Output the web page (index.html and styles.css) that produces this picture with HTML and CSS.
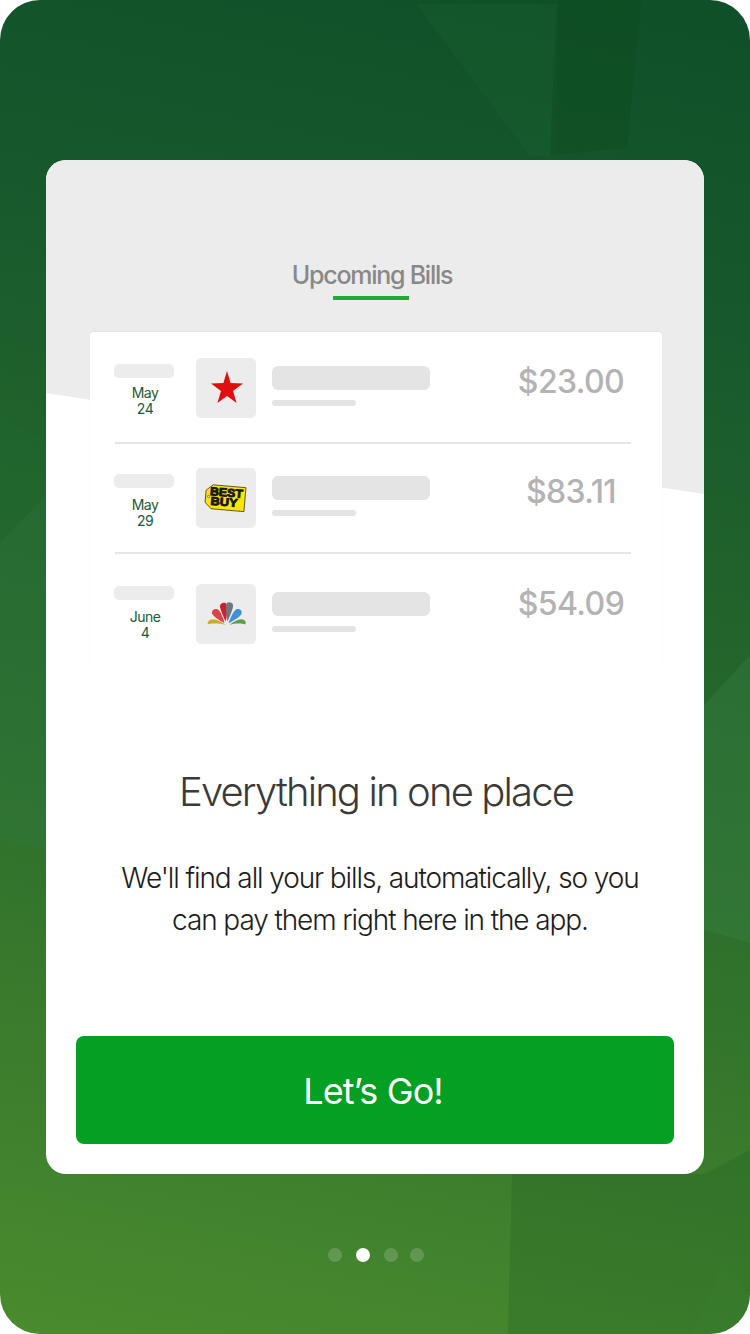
FILE: index.html
```html
<!DOCTYPE html>
<html lang="en">
<head>
  <meta charset="UTF-8">
  <title>Upcoming Bills</title>
  <link rel="stylesheet" href="styles.css">
</head>
<body>
  <div class="screen">
    <svg class="backdrop" viewBox="0 0 750 1334" preserveAspectRatio="none" aria-hidden="true">
      <polygon points="416,4 558,4 556,156 530,156" fill="#2a7a3a" opacity=".12"/>
      <polygon points="557,0 641,0 627,148 550,155" fill="#0c4a1c" opacity=".4"/>
      <polygon points="0,415 46,440 46,495 0,543" fill="#1c6a2e" opacity=".25"/>
      <polygon points="0,543 46,495 46,850 0,840" fill="#2f7a48" opacity=".25"/>
      <polygon points="704,705 750,655 750,943 704,930" fill="#3f8a50" opacity=".25"/>
      <polygon points="512,1174 704,1174 750,1150 750,1334 508,1334" fill="#1d5a22" opacity=".25"/>
      <polygon points="690,1334 725,1260 750,1300 750,1334" fill="#3f8a3a" opacity=".12"/>
    </svg>

    <div class="card">
      <div class="card-shade"></div>

      <div class="tab">
        <h2 class="tab-title">Upcoming Bills</h2>
        <div class="tab-line"></div>
      </div>

      <div class="bills">
        <div class="bill bill-first">
          <div class="bill-date">
            <div class="chip"></div>
            <div class="date-text">May<br>24</div>
          </div>
          <div class="logo">
            <svg width="60" height="60" viewBox="0 0 60 60">
              <polygon fill="#e00f0f" points="31,13 34.600,25 47,25.500 37,33 40.600,45 31,38 21.400,45 25,33 15,25.500 27.400,25"/>
            </svg>
          </div>
          <div class="lines">
            <div class="line-big"></div>
            <div class="line-small"></div>
          </div>
          <div class="amount">$23.00</div>
        </div>

        <div class="divider"></div>

        <div class="bill">
          <div class="bill-date">
            <div class="chip"></div>
            <div class="date-text">May<br>29</div>
          </div>
          <div class="logo">
            <svg width="60" height="60" viewBox="0 0 60 60">
              <g transform="rotate(5 30 30)">
                <path d="M16 18 L49 18 L49 42 L16 42 L9.500 36 L9.500 24 Z" fill="#ffe40c" stroke="#3a3a1e" stroke-width=".8"/>
                <circle cx="12.500" cy="30" r="1.200" fill="#e8e8e8" stroke="#333" stroke-width=".5"/>
                <text class="bb-text" x="30" y="28.500" textLength="33" lengthAdjust="spacingAndGlyphs">BEST</text>
                <text class="bb-text" x="28.500" y="38" textLength="27" lengthAdjust="spacingAndGlyphs">BUY</text>
              </g>
            </svg>
          </div>
          <div class="lines">
            <div class="line-big"></div>
            <div class="line-small"></div>
          </div>
          <div class="amount">$83.11</div>
        </div>

        <div class="divider"></div>

        <div class="bill bill-last">
          <div class="bill-date">
            <div class="chip"></div>
            <div class="date-text">June<br>4</div>
          </div>
          <div class="logo">
            <svg width="60" height="60" viewBox="0 0 60 60">
              <g transform="translate(.5 4.100) scale(1 .9)">
                <path d="M29 41 C23 39 13 39 11.500 40.500 C10 38 13 34.500 16.500 34.500 C21 34.500 26 38 29 41 Z" fill="#d1ab1f"/>
                <path d="M28 39 C23 36 17 32 15.500 28 C15 24.500 18 22.500 21 23.500 C24 25 26.500 33 28 39 Z" fill="#d8444a"/>
                <path d="M29 37 C26.500 31 23.500 23 23.500 20 C23.500 17 26.500 15.500 29 16.500 C31.500 18 31 30 29 37 Z" fill="#cf1f2a"/>
                <path d="M31 37 C29.500 30 29 19 30 17 C31.500 15 35.500 15.500 36.500 18.500 C37 22 33.500 31 31 37 Z" fill="#6e7780"/>
                <path d="M32 39 C34 33 37 25 40 23.500 C43 22.500 46 25 45 28.500 C43.500 32 37.500 36 32 39 Z" fill="#3f90d4"/>
                <path d="M33 41 C36 38 41 34.500 45 34.500 C48 34.500 50.500 38 48.500 40.500 C46 39 38 39 33 41 Z" fill="#5c9e45"/>
              </g>
            </svg>
          </div>
          <div class="lines">
            <div class="line-big"></div>
            <div class="line-small"></div>
          </div>
          <div class="amount">$54.09</div>
        </div>
      </div>

      <div class="copy">
        <h1 class="copy-title">Everything in one place</h1>
        <p class="copy-text">We'll find all your bills, automatically, so you can pay them right here in the app.</p>
      </div>

      <button class="go-btn">Let’s Go!</button>
    </div>

    <div class="dots">
      <span class="dot"></span>
      <span class="dot dot-on"></span>
      <span class="dot"></span>
      <span class="dot"></span>
    </div>
  </div>
</body>
</html>
```

FILE: styles.css
```css
* {
  box-sizing: border-box;
}

html, body {
  margin: 0;
  background: #fff;
}

body {
  font-family: Inter, 'Noto Sans', sans-serif;
}

.screen {
  position: relative;
  width: 750px;
  height: 1334px;
  padding: 160px 46px 0 46px;
  border-radius: 40px;
  overflow: hidden;
  background: linear-gradient(192deg, #0f4f29 0%, #17592c 22%, #2b6c2c 58%, #4a8b2e 100%);
}

.backdrop {
  position: absolute;
  top: 0;
  left: 0;
  width: 750px;
  height: 1334px;
}

.card {
  position: relative;
  height: 1014px;
  background: #fff;
  border-radius: 20px;
  overflow: hidden;
}

/* grey slanted area behind the list */
.card-shade {
  position: absolute;
  top: 0;
  left: 0;
  width: 658px;
  height: 334px;
  background: #ececec;
  clip-path: polygon(0 0, 100% 0, 100% 100%, 0 233px);
}

.tab {
  position: relative;
  display: flex;
  flex-direction: column;
  align-items: center;
  padding-top: 99px;
  margin-left: 50px;
  width: 550px;
}

.tab-title {
  margin: 0 0 0 2px;
  font-size: 25px;
  line-height: 32px;
  font-weight: 500;
  letter-spacing: -1.25px;
  color: #888;
}

.tab-line {
  width: 76px;
  height: 4px;
  margin-top: 5px;
  background: #1eac35;
}

.bills {
  position: relative;
  width: 572px;
  height: 338px;
  margin: 32px 0 0 44px;
  background: #fff;
  border-radius: 4px;
  box-shadow: 0 -1px 2px rgba(0, 0, 0, 0.05);
}

.bill {
  display: flex;
  align-items: flex-start;
  padding: 24px 0 0 24px;
  height: 108px;
}

.bill-first {
  padding-top: 26px;
  height: 110px;
}

.bill-last {
  padding-top: 30px;
}

.bill-date {
  width: 60px;
  margin-right: 22px;
  padding-top: 6px;
}

.bill-last .bill-date {
  padding-top: 2px;
}

.chip {
  height: 14px;
  border-radius: 5px;
  background: #ececec;
}

.date-text {
  margin-top: 9px;
  padding-left: 2px;
  text-align: center;
  font-size: 14px;
  line-height: 16px;
  letter-spacing: -0.5px;
  color: #1a5a38;
}

.bill-first .date-text {
  margin-top: 7px;
}

.logo {
  width: 60px;
  height: 60px;
  margin-right: 16px;
  border-radius: 5px;
  background: #ececec;
}

.logo svg {
  display: block;
}

.bb-text {
  font-family: 'Liberation Sans', sans-serif;
  font-size: 11.500px;
  font-weight: 700;
  text-anchor: middle;
  stroke: #171717;
  stroke-width: .9px;
  fill: #171717;
}

.lines {
  width: 158px;
  padding-top: 8px;
}

.line-big {
  height: 24px;
  border-radius: 6px;
  background: #e4e4e4;
}

.line-small {
  width: 84px;
  height: 6px;
  margin-top: 10px;
  border-radius: 3px;
  background: #e4e4e4;
}

.amount {
  width: 130px;
  margin-top: 2px;
  margin-left: 76px;
  text-align: center;
  font-size: 32px;
  line-height: 44px;
  font-weight: 500;
  letter-spacing: -0.6px;
  color: #b3b3b3;
}

.bill-last .amount {
  margin-top: -2px;
}

.divider {
  width: 516px;
  height: 2px;
  margin-left: 25px;
  background: #e6e6e6;
}

.copy {
  display: flex;
  flex-direction: column;
  align-items: center;
  padding: 93px 58px 0 68px;
}

.copy-title {
  margin: 0 8px 0 0;
  font-size: 40px;
  line-height: 58px;
  font-weight: 300;
  letter-spacing: -1.85px;
  color: #3a3a3a;
}

.copy-text {
  margin: 36px 0 0 0;
  text-align: center;
  font-size: 28px;
  line-height: 42px;
  font-weight: 300;
  letter-spacing: -1.1px;
  color: #1c1c1c;
}

.go-btn {
  position: absolute;
  left: 30px;
  bottom: 30px;
  display: block;
  width: 598px;
  height: 108px;
  padding: 2px 4px 0 0;
  border: none;
  border-radius: 8px;
  background: #04a023;
  color: #fff;
  font-family: inherit;
  font-size: 36px;
  font-weight: 400;
  letter-spacing: -0.9px;
}

.dots {
  position: relative;
  display: flex;
  align-items: center;
  margin: 74px 0 0 282px;
}

.dot {
  width: 14px;
  height: 14px;
  margin-right: 14px;
  border-radius: 50%;
  background: rgba(255, 255, 255, 0.17);
}

.dot:nth-child(3) {
  margin-right: 12px;
}

.dot-on {
  background: #fff;
}
```
